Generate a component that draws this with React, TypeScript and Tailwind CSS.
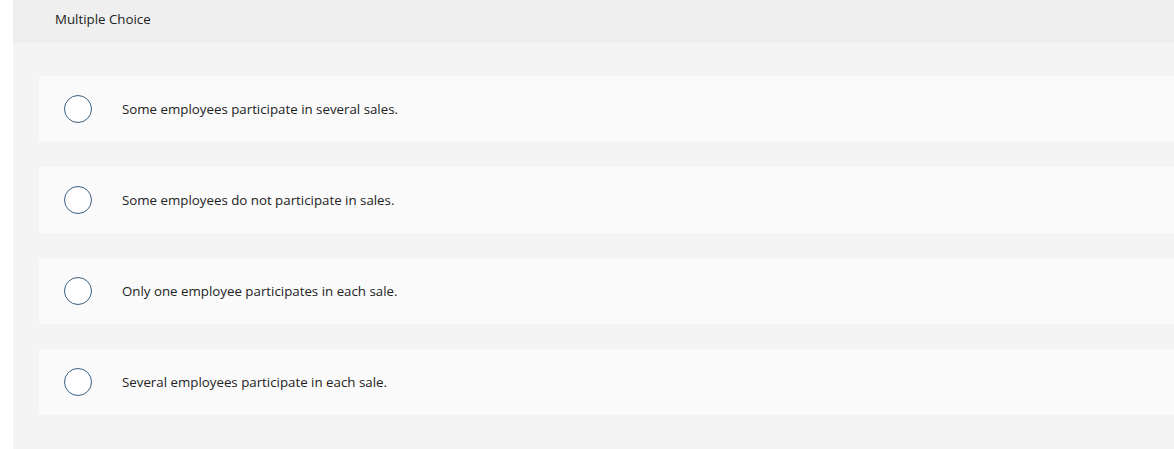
const choices = [
  "Some employees participate in several sales.",
  "Some employees do not participate in sales.",
  "Only one employee participates in each sale.",
  "Several employees participate in each sale.",
];

export default function App() {
  return (
    <div className="min-h-[449px] bg-white pl-[13px] font-['Open_Sans',sans-serif] text-[#222]">
      <div className="bg-[#f4f4f4] min-h-[449px]">
        <div className="h-[43px] bg-[#efefef] pl-[42px] pt-[10px] text-[13.3px]">Multiple Choice</div>
        <div className="pl-[26px] pt-[33px] flex flex-col gap-[25px]">
          {choices.map((c) => (
            <div key={c} className="h-[66px] bg-[#fafafa] flex items-center">
              <div className="ml-[25px] w-[28px] h-[28px] rounded-full border-[1.5px] border-[#3a5f7f] bg-white" />
              <span className="ml-[30px] mt-[2px] text-[13.3px]">{c}</span>
            </div>
          ))}
        </div>
      </div>
    </div>
  );
}
